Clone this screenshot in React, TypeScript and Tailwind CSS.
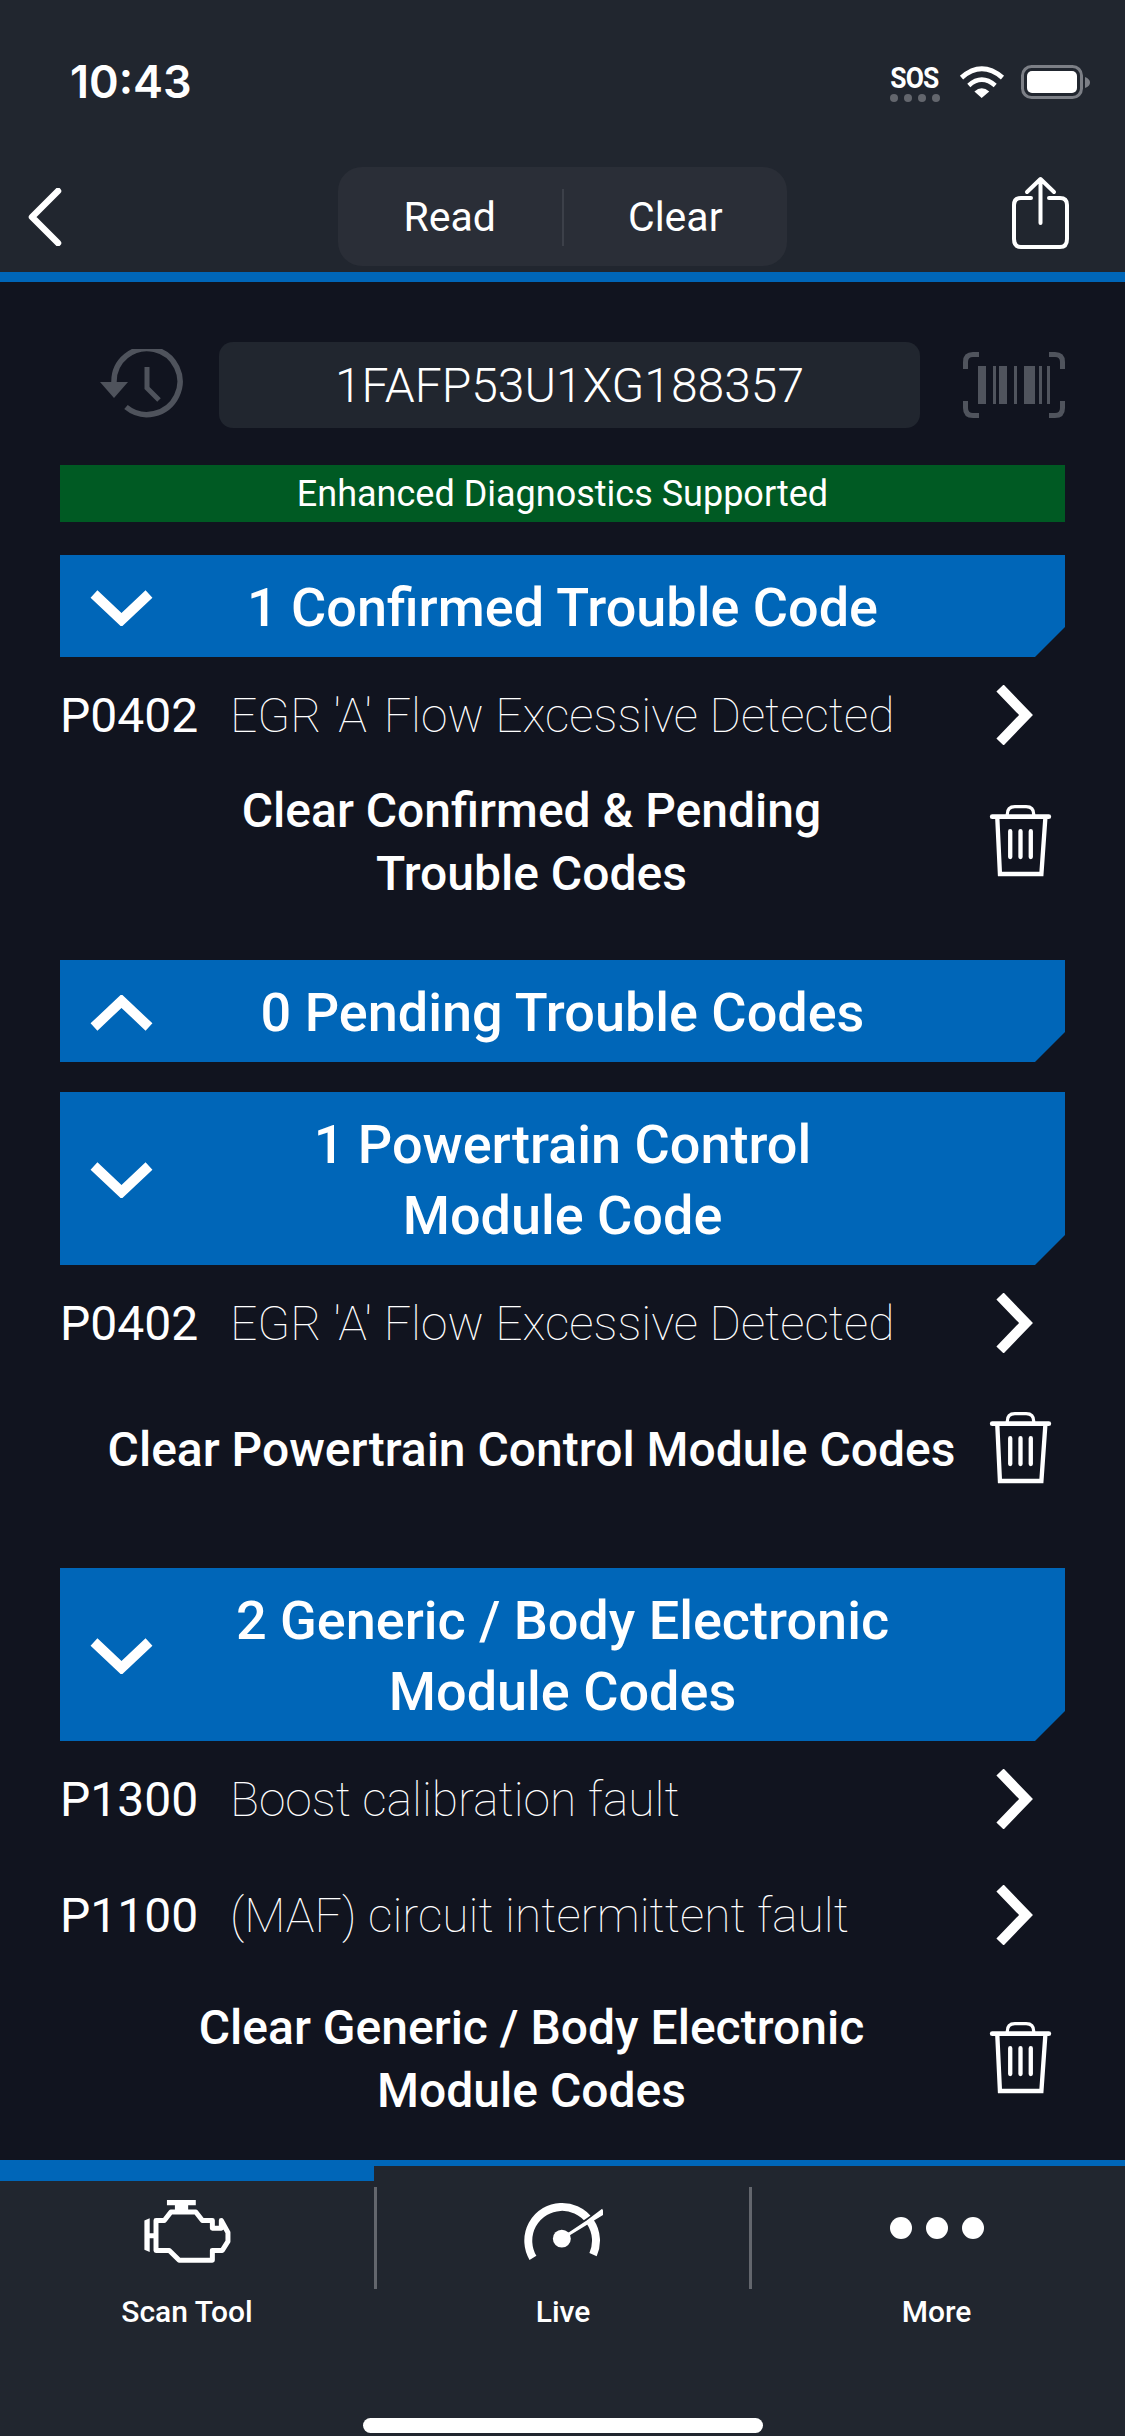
import React from "react";

const Wifi = () => (
  <svg width="46" height="33" viewBox="300 75 138 100" fill="none">
    <path d="M307 113 Q368 60 431 113" stroke="#fff" strokeWidth="15" />
    <path d="M329 137 Q368 102 409 137" stroke="#fff" strokeWidth="14" />
    <path d="M346 155 Q368 136 391 155 L368 175 Z" fill="#fff" />
  </svg>
);

const Battery = () => (
  <svg width="70" height="35" viewBox="0 0 70 35" fill="none">
    <rect x="1.5" y="1.5" width="59" height="31" rx="9" stroke="#7c7f86" strokeWidth="3" />
    <rect x="6" y="6" width="50" height="22" rx="5" fill="#fff" />
    <path d="M64 12 Q69 14 69 17.5 Q69 21 64 23 Z" fill="#7c7f86" />
  </svg>
);

const Back = () => (
  <svg width="34" height="58" viewBox="0 0 34 58" fill="none">
    <path d="M30 3 L4 29 L30 55" stroke="#fff" strokeWidth="6.5" strokeLinecap="round" strokeLinejoin="round" />
  </svg>
);

const Share = () => (
  <svg width="59" height="74" viewBox="0 0 59 74" fill="none" stroke="#fff" strokeWidth="4" strokeLinecap="round" strokeLinejoin="round">
    <path d="M20 22 H10 Q3 22 3 29 V63 Q3 71 10 71 H49 Q56 71 56 63 V29 Q56 22 49 22 H38" />
    <path d="M29.5 47 V3 M16 16 L29.5 3 L43 16" />
  </svg>
);

const History = () => (
  <svg width="84" height="72" viewBox="0 0 84 72" fill="none">
    <path d="M14 33 A33 33 0 1 1 26 58" stroke="#4f535c" strokeWidth="5.5" />
    <path d="M0 33 H28 L14 49 Z" fill="#4f535c" />
    <path d="M47 18 V39 L59 51" stroke="#4f535c" strokeWidth="5" />
  </svg>
);

const Barcode = () => (
  <svg width="102" height="66" viewBox="0 0 102 66" fill="none">
    <path
      d="M16 2.5 H10 Q2.5 2.5 2.5 10 V17 M86 2.5 H92 Q99.5 2.5 99.5 10 V17 M16 63.5 H10 Q2.5 63.5 2.5 56 V49 M86 63.5 H92 Q99.5 63.5 99.5 56 V49"
      stroke="#50545d"
      strokeWidth="5"
    />
    <g fill="#50545d">
      <rect x="15" y="14" width="8" height="38" />
      <rect x="30" y="14" width="3" height="38" />
      <rect x="36" y="14" width="8" height="38" />
      <rect x="51" y="14" width="3" height="38" />
      <rect x="61" y="14" width="11" height="38" />
      <rect x="76" y="14" width="3" height="38" />
      <rect x="84" y="14" width="3" height="38" />
    </g>
  </svg>
);

const ChevronV = ({ up }: { up?: boolean }) => (
  <svg width="63" height="36" viewBox="0 0 63 36" fill="none" className={up ? "rotate-180" : ""}>
    <path d="M4 4 L31.5 30 L59 4" stroke="#fff" strokeWidth="10" />
  </svg>
);

const ChevronR = () => (
  <svg width="38" height="60" viewBox="0 0 38 60" fill="none">
    <path d="M4 3 L30 30 L4 57" stroke="#fff" strokeWidth="10" />
  </svg>
);

const Trash = () => (
  <svg width="63" height="73" viewBox="150 370 190 220" fill="none" stroke="#fff" strokeLinecap="round">
    <path d="M205 402 Q205 378 228 378 H262 Q285 378 285 402" strokeWidth="10" />
    <path d="M160 408 H330" strokeWidth="15" />
    <path d="M175 412 L183 581 H308 L320 412" strokeWidth="13" strokeLinecap="butt" />
    <path d="M214 452 V530 M245 452 V530 M276 452 V530" strokeWidth="13" />
  </svg>
);

const Engine = () => (
  <svg width="87" height="63" viewBox="130 200 260 190" fill="none">
    <path d="M198 200 H285 V216 H262 V236 H222 V216 H198 Z" fill="#fff" />
    <path
      d="M165 262 H190 L210 236 H285 L305 262 H335 V285 H362 V262 L382 298 V325 L365 352 H335 V382 H235 L205 352 H165 Z"
      stroke="#fff"
      strokeWidth="15"
      strokeLinejoin="round"
    />
    <path d="M130 262 L146 255 V300 H165 V315 H146 V357 L130 350 Z" fill="#fff" />
  </svg>
);

const Gauge = () => (
  <svg width="79" height="58" viewBox="1268 208 238 174" fill="none">
    <path d="M1295 376 A102 102 0 1 1 1476 366" stroke="#fff" strokeWidth="24" />
    <path d="M1382 318 L1500 236" stroke="#21262f" strokeWidth="15" />
    <path d="M1382 318 L1460 266 L1502 234 L1506 242 Z" stroke="#fff" strokeWidth="8" fill="#fff" />
    <circle cx="1382" cy="318" r="27" fill="#fff" />
  </svg>
);

const Dots = () => (
  <svg width="94" height="22" viewBox="0 0 94 22" fill="#fff">
    <circle cx="11" cy="11" r="11" />
    <circle cx="47" cy="11" r="11" />
    <circle cx="83" cy="11" r="11" />
  </svg>
);

const SectionHeader = ({ lines, up }: { lines: string[]; up?: boolean }) => (
  <div className="grid grid-cols-[122px_1fr_122px] items-center bg-[#0066b8] pt-[17px] pb-[14px] [clip-path:polygon(0_0,100%_0,100%_calc(100%-30px),calc(100%-30px)_100%,0_100%)]">
    <div className="flex justify-center">
      <ChevronV up={up} />
    </div>
    <div className="text-center text-[54px] leading-[71px] font-medium whitespace-nowrap text-white">
      {lines.map((l) => (
        <div key={l}>{l}</div>
      ))}
    </div>
  </div>
);

const CodeRow = ({ code, text }: { code: string; text: string }) => (
  <div className="flex h-[116px] items-center">
    <span className="w-[170px] shrink-0 pt-[2px] text-[48px] font-normal text-white">{code}</span>
    <span className="flex-1 pt-[2px] text-[48px] font-thin whitespace-nowrap text-white">{text}</span>
    <span className="mr-[31px]">
      <ChevronR />
    </span>
  </div>
);

const ClearRow = ({ lines, className }: { lines: string[]; className: string }) => (
  <div className={`flex items-center ${className}`}>
    <div className="ml-[12px] flex-1 text-center text-[48px] leading-[63px] font-medium whitespace-nowrap text-white">
      {lines.map((l) => (
        <div key={l}>{l}</div>
      ))}
    </div>
    <span className="mt-[-4px] mr-[13px] ml-[-2px]">
      <Trash />
    </span>
  </div>
);

const Tab = ({ label, icon, active, className, iconClass }: { label: string; icon: React.ReactNode; active?: boolean; className: string; iconClass?: string }) => (
  <div className={`flex flex-col items-center ${className}`}>
    <div className={`h-[15px] w-full ${active ? "bg-[#0066b8]" : ""}`} />
    <div className={`flex h-[100px] items-center justify-center ${iconClass ?? ""}`}>{icon}</div>
    <div className="mt-[13px] text-[30px] leading-[36px] font-medium text-white">{label}</div>
  </div>
);

const Divider = () => <div className="mt-[21px] h-[102px] w-[3px] bg-[#63666d]" />;

export default function App() {
  return (
    <div className="flex h-[2436px] w-[1125px] flex-col overflow-hidden bg-[#11141f] font-['Roboto',sans-serif]">
      <header className="h-[272px] bg-[#21262f] px-[28px]">
        <div className="flex h-[167px] items-start justify-between">
          <span className="mt-[56px] ml-[42px] font-['Inter',sans-serif] text-[45px] leading-[52px] font-semibold text-white">
            10:43
          </span>
          <div className="mt-[65px] mr-[6px] flex items-start">
            <div className="mr-[17px] flex flex-col items-center">
              <span className="scale-x-[0.88] text-[30px] leading-[26px] font-bold tracking-[-1px] text-white">SOS</span>
              <div className="mt-[3px] flex gap-[6px]">
                <i className="h-[8px] w-[8px] rounded-full bg-[#63666d]" />
                <i className="h-[8px] w-[8px] rounded-full bg-[#63666d]" />
                <i className="h-[8px] w-[8px] rounded-full bg-[#63666d]" />
                <i className="h-[8px] w-[8px] rounded-full bg-[#63666d]" />
              </div>
            </div>
            <Wifi />
            <span className="ml-[16px]">
              <Battery />
            </span>
          </div>
        </div>
        <div className="flex items-center">
          <Back />
          <div className="ml-[276px] flex h-[99px] w-[449px] items-center rounded-[24px] bg-[#2a2e37] pt-[2px] text-[41px] text-white">
            <span className="flex-1 text-center">Read</span>
            <i className="h-[57px] w-[2px] bg-[#3c4049]" />
            <span className="flex-1 text-center">Clear</span>
          </div>
          <span className="mt-[-7px] ml-[224px]">
            <Share />
          </span>
        </div>
      </header>
      <div className="h-[10px] bg-[#0066b8]" />

      <main className="flex-1 px-[60px]">
        <div className="mt-[60px] flex items-center">
          <span className="ml-[40px]">
            <History />
          </span>
          <div className="ml-[35px] flex h-[86px] w-[701px] items-center justify-center rounded-[14px] bg-[#21262f] pt-[2px] text-[48px] font-light text-white">
            1FAFP53U1XG188357
          </div>
          <span className="ml-[43px]">
            <Barcode />
          </span>
        </div>
        <div className="mt-[37px] flex h-[57px] items-center justify-center bg-[#005a23] text-[36px] font-normal text-white">
          Enhanced Diagnostics Supported
        </div>

        <div className="mt-[33px]">
          <SectionHeader lines={["1 Confirmed Trouble Code"]} />
        </div>
        <CodeRow code="P0402" text="EGR 'A' Flow Excessive Detected" />
        <ClearRow className="h-[138px]" lines={["Clear Confirmed & Pending", "Trouble Codes"]} />

        <div className="mt-[49px]">
          <SectionHeader up lines={["0 Pending Trouble Codes"]} />
        </div>
        <div className="mt-[30px]">
          <SectionHeader lines={["1 Powertrain Control", "Module Code"]} />
        </div>
        <CodeRow code="P0402" text="EGR 'A' Flow Excessive Detected" />
        <ClearRow className="h-[136px]" lines={["Clear Powertrain Control Module Codes"]} />

        <div className="mt-[51px]">
          <SectionHeader lines={["2 Generic / Body Electronic", "Module Codes"]} />
        </div>
        <CodeRow code="P1300" text="Boost calibration fault" />
        <CodeRow code="P1100" text="(MAF) circuit intermittent fault" />
        <ClearRow className="mt-[17px] h-[138px]" lines={["Clear Generic / Body Electronic", "Module Codes"]} />
      </main>

      <footer className="h-[276px] border-t-[6px] border-[#0066b8] bg-[#21262f]">
        <div className="flex">
          <Tab className="w-[374px]" active label="Scan Tool" icon={<Engine />} />
          <Divider />
          <Tab className="w-[372px]" label="Live" icon={<Gauge />} />
          <Divider />
          <Tab className="flex-1 pr-[4px]" label="More" iconClass="pb-[6px]" icon={<Dots />} />
        </div>
        <div className="mx-auto mt-[88px] h-[15px] w-[400px] rounded-full bg-white" />
      </footer>
    </div>
  );
}
